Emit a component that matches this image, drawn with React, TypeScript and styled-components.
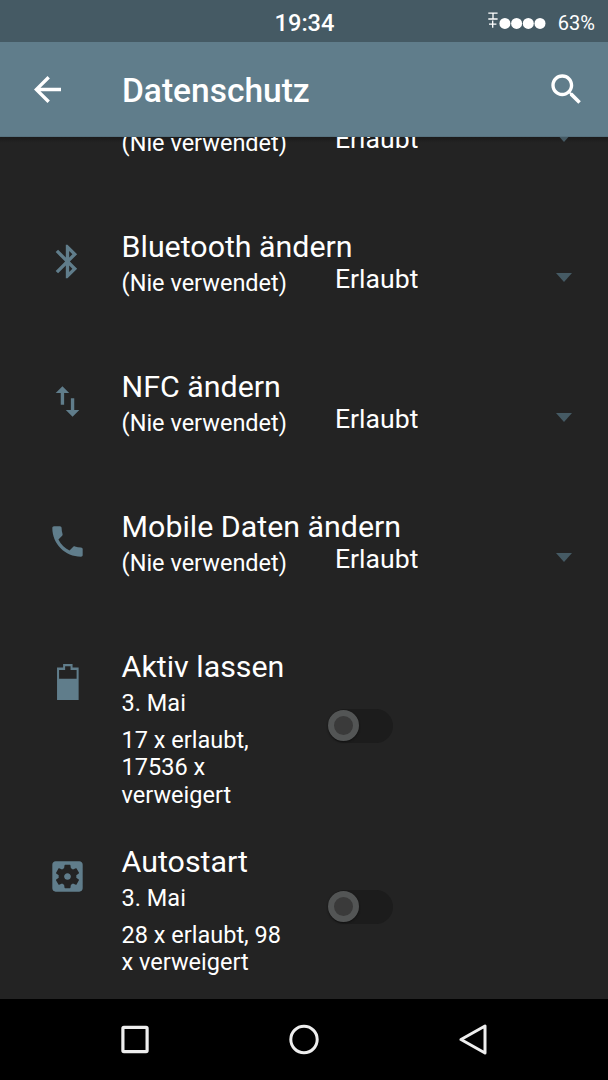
import React from "react";
import styled, { createGlobalStyle } from "styled-components";

const Global = createGlobalStyle`
  * { box-sizing: border-box; }
  body { margin: 0; background: #232323; }
`;

const Screen = styled.div`
  width: 608px;
  height: 1080px;
  display: flex;
  flex-direction: column;
  overflow: hidden;
  background: #232323;
  color: #fff;
  font-family: Roboto, "Liberation Sans", sans-serif;
`;

const StatusBar = styled.header`
  flex: 0 0 42px;
  display: grid;
  grid-template-columns: 1fr auto 1fr;
  align-items: center;
  padding: 3px 13px 0 14px;
  background: #455a64;
`;

const Clock = styled.time`
  grid-column: 2;
  font-size: 23.6px;
  line-height: 28px;
  font-weight: 500;
`;

const StatusRight = styled.div`
  display: flex;
  justify-content: flex-end;
  align-items: center;
  gap: 12px;
`;

const Battery = styled.span`
  font-size: 20px;
  line-height: 28px;
`;

const AppBar = styled.div`
  flex: 0 0 95px;
  display: flex;
  align-items: center;
  padding: 0 21px 0 27px;
  background: #607d8b;
  border-bottom: 1px solid #587380;
`;

const AppTitle = styled.h1`
  flex: 1;
  margin: 4px 0 0 54px;
  font-size: 33.5px;
  line-height: 40px;
  font-weight: 500;
`;

const List = styled.main`
  flex: 1;
  min-height: 0;
  overflow: hidden;
  background: linear-gradient(#1b1b1b, #232323 6px);
`;

const Rows = styled.div`
  margin-top: -51px;
`;

const Row = styled.section<{ $height: number }>`
  height: ${(p) => p.$height}px;
  display: grid;
  grid-template-columns: 121.6px 206.4px 1fr;
  align-items: start;
`;

const IconCell = styled.div`
  padding: 15px 0 0 47px;
  svg { display: block; }
`;

const TextCell = styled.div`
  padding-top: 3px;
`;

const Title = styled.h2`
  margin: 0;
  font-size: 30.35px;
  line-height: 36px;
  font-weight: 400;
  white-space: nowrap;
`;

const Sub = styled.p`
  margin: 4px 0 0;
  font-size: 23.5px;
  line-height: 28px;
`;

const Details = styled.p`
  width: 176px;
  margin: 9.6px 0 0;
  font-size: 23.5px;
  line-height: 27.6px;
`;

const Select = styled.div`
  display: flex;
  justify-content: space-between;
  align-items: flex-start;
  padding: 37px 36px 0 7px;
  font-size: 26.6px;
  line-height: 32px;
`;

const Caret = styled.svg`
  display: block;
  margin-top: 10px;
`;

const SwitchCell = styled.div<{ $offset: number }>`
  padding-top: ${(p) => p.$offset}px;
`;

const Track = styled.div`
  width: 65px;
  height: 34px;
  padding: 1px 0 0;
  border-radius: 17px;
  background: #1c1c1c;
`;

const Thumb = styled.div`
  width: 31px;
  height: 31px;
  border: 6px solid #535555;
  border-radius: 50%;
  background: #3a3a3a;
  box-shadow: 0 1px 2px #111;
`;

const NavBar = styled.nav`
  flex: 0 0 81px;
  display: grid;
  grid-template-columns: repeat(3, 169px);
  justify-content: center;
  align-items: center;
  justify-items: center;
  background: #000;
`;

const paths = {
  back: "M20 11H7.83l5.59-5.59L12 4l-8 8 8 8 1.41-1.41L7.83 13H20v-2z",
  search:
    "M15.5 14h-.79l-.28-.27C15.41 12.59 16 11.11 16 9.5 16 5.91 13.09 3 9.5 3S3 5.91 3 9.5 5.91 16 9.5 16c1.61 0 3.09-.59 4.23-1.57l.27.28v.79l5 4.99L20.49 19l-4.99-5zm-6 0C7.01 14 5 11.99 5 9.5S7.01 5 9.5 5 14 7.01 14 9.5 11.99 14 9.5 14z",
  bluetooth:
    "M17.71 7.71L12 2h-1v7.59L6.41 5 5 6.41 10.59 12 5 17.59 6.41 19 11 14.41V22h1l5.71-5.71-4.3-4.29 4.3-4.29zM13 5.83l1.88 1.88L13 9.59V5.83zm1.88 10.46L13 18.17v-3.76l1.88 1.88z",
  swap: "M16 17.01V10h-2v7.01h-3L15 21l4-3.99h-3zM9 3L5 6.99h3V14h2V6.99h3L9 3z",
  phone:
    "M6.62 10.79c1.44 2.83 3.76 5.14 6.59 6.59l2.2-2.2c.27-.27.67-.36 1.02-.24 1.12.37 2.33.57 3.57.57.55 0 1 .45 1 1V20c0 .55-.45 1-1 1-9.39 0-17-7.61-17-17 0-.55.45-1 1-1h3.5c.55 0 1 .45 1 1 0 1.25.2 2.45.57 3.57.11.35.03.74-.25 1.02l-2.2 2.2z",
  battery:
    "M9.4 1.7H15V3.7H18.6V23H5.8V3.7H9.4ZM10.6 2.9V5.2H7V10.3H17.4V5.2H13.8V2.9Z",
  settings:
    "M12 10c-1.1 0-2 .9-2 2s.9 2 2 2 2-.9 2-2-.9-2-2-2zm7-7H5c-1.11 0-2 .9-2 2v14c0 1.1.89 2 2 2h14c1.11 0 2-.9 2-2V5c0-1.1-.89-2-2-2zm-1.75 9c0 .23-.02.46-.05.68l1.48 1.16c.13.11.17.3.08.45l-1.4 2.42c-.09.15-.27.21-.43.15l-1.74-.7c-.36.28-.76.51-1.18.69l-.26 1.85c-.03.17-.18.3-.35.3h-2.8c-.17 0-.32-.13-.35-.29l-.26-1.85c-.43-.18-.82-.41-1.18-.69l-1.74.7c-.16.06-.34 0-.43-.15l-1.4-2.42c-.09-.15-.05-.34.08-.45l1.48-1.16c-.03-.23-.05-.46-.05-.69 0-.23.02-.46.05-.68l-1.48-1.16c-.13-.11-.17-.3-.08-.45l1.4-2.42c.09-.15.27-.21.43-.15l1.74.7c.36-.28.76-.51 1.18-.69l.26-1.85c.03-.17.18-.3.35-.3h2.8c.17 0 .32.13.35.29l.26 1.85c.43.18.82.41 1.18.69l1.74-.7c.16-.06.34 0 .43.15l1.4 2.42c.09.15.05.34-.08.45l-1.48 1.16c.03.23.05.46.05.69z",
};

type IconName = keyof typeof paths;

const Icon = ({ name, color = "#607d8b" }: { name: IconName; color?: string }) => (
  <svg width="41" height="41" viewBox="-0.15 -0.15 24.3 24.3" fill={color} fillRule="evenodd">
    <path d={paths[name]} />
  </svg>
);

const Signal = () => (
  <svg width="58" height="22" viewBox="0 0 58 22">
    <g fill="none" stroke="#fff" strokeWidth="1.3">
      <path d="M0.3 1.2H9.6M0.3 7H9.6M5 1.2V7M1 12.2H8.4M4.7 8.6V15.8" />
    </g>
    <g fill="#fff">
      {[16.9, 28.6, 40.3, 52].map((x) => (
        <circle key={x} cx={x} cy="11.4" r="5.5" />
      ))}
    </g>
  </svg>
);

type Entry = {
  icon?: IconName;
  title: string;
  sub: string;
  details?: string;
  height: number;
  switchOffset?: number;
};

const entries: Entry[] = [
  { title: "", sub: "(Nie verwendet)", height: 140 },
  { icon: "bluetooth", title: "Bluetooth ändern", sub: "(Nie verwendet)", height: 140 },
  { icon: "swap", title: "NFC ändern", sub: "(Nie verwendet)", height: 140 },
  { icon: "phone", title: "Mobile Daten ändern", sub: "(Nie verwendet)", height: 140 },
  {
    icon: "battery",
    title: "Aktiv lassen",
    sub: "3. Mai",
    details: "17 x erlaubt, 17536 x verweigert",
    height: 195,
    switchOffset: 63,
  },
  {
    icon: "settings",
    title: "Autostart",
    sub: "3. Mai",
    details: "28 x erlaubt, 98 x verweigert",
    height: 167,
    switchOffset: 49,
  },
];

export default function App() {
  return (
    <Screen>
      <Global />
      <StatusBar>
        <Clock>19:34</Clock>
        <StatusRight>
          <Signal />
          <Battery>63%</Battery>
        </StatusRight>
      </StatusBar>
      <AppBar>
        <Icon name="back" color="#fff" />
        <AppTitle>Datenschutz</AppTitle>
        <Icon name="search" color="#fff" />
      </AppBar>
      <List>
        <Rows>
          {entries.map((e, i) => (
            <Row key={i} $height={e.height}>
              <IconCell>{e.icon && <Icon name={e.icon} />}</IconCell>
              <TextCell>
                <Title>{e.title || "\u00a0"}</Title>
                <Sub>{e.sub}</Sub>
                {e.details && <Details>{e.details}</Details>}
              </TextCell>
              {e.switchOffset !== undefined ? (
                <SwitchCell $offset={e.switchOffset}>
                  <Track>
                    <Thumb />
                  </Track>
                </SwitchCell>
              ) : (
                <Select>
                  <span>Erlaubt</span>
                  <Caret width="16" height="9" viewBox="0 0 16 9">
                    <path d="M0 0H16L8 9Z" fill="#455a64" />
                  </Caret>
                </Select>
              )}
            </Row>
          ))}
        </Rows>
      </List>
      <NavBar>
        <svg width="30" height="32" viewBox="0 0 30 32">
          <rect x="2.9" y="3.4" width="24.2" height="24.2" rx="1" fill="none" stroke="#eee" strokeWidth="3.2" />
        </svg>
        <svg width="30" height="32" viewBox="0 0 30 32">
          <circle cx="15" cy="15.5" r="13.2" fill="none" stroke="#eee" strokeWidth="3" />
        </svg>
        <svg width="30" height="32" viewBox="0 0 30 32">
          <path d="M27 2V29L3 15.5Z" fill="none" stroke="#eee" strokeWidth="3" strokeLinejoin="round" />
        </svg>
      </NavBar>
    </Screen>
  );
}
